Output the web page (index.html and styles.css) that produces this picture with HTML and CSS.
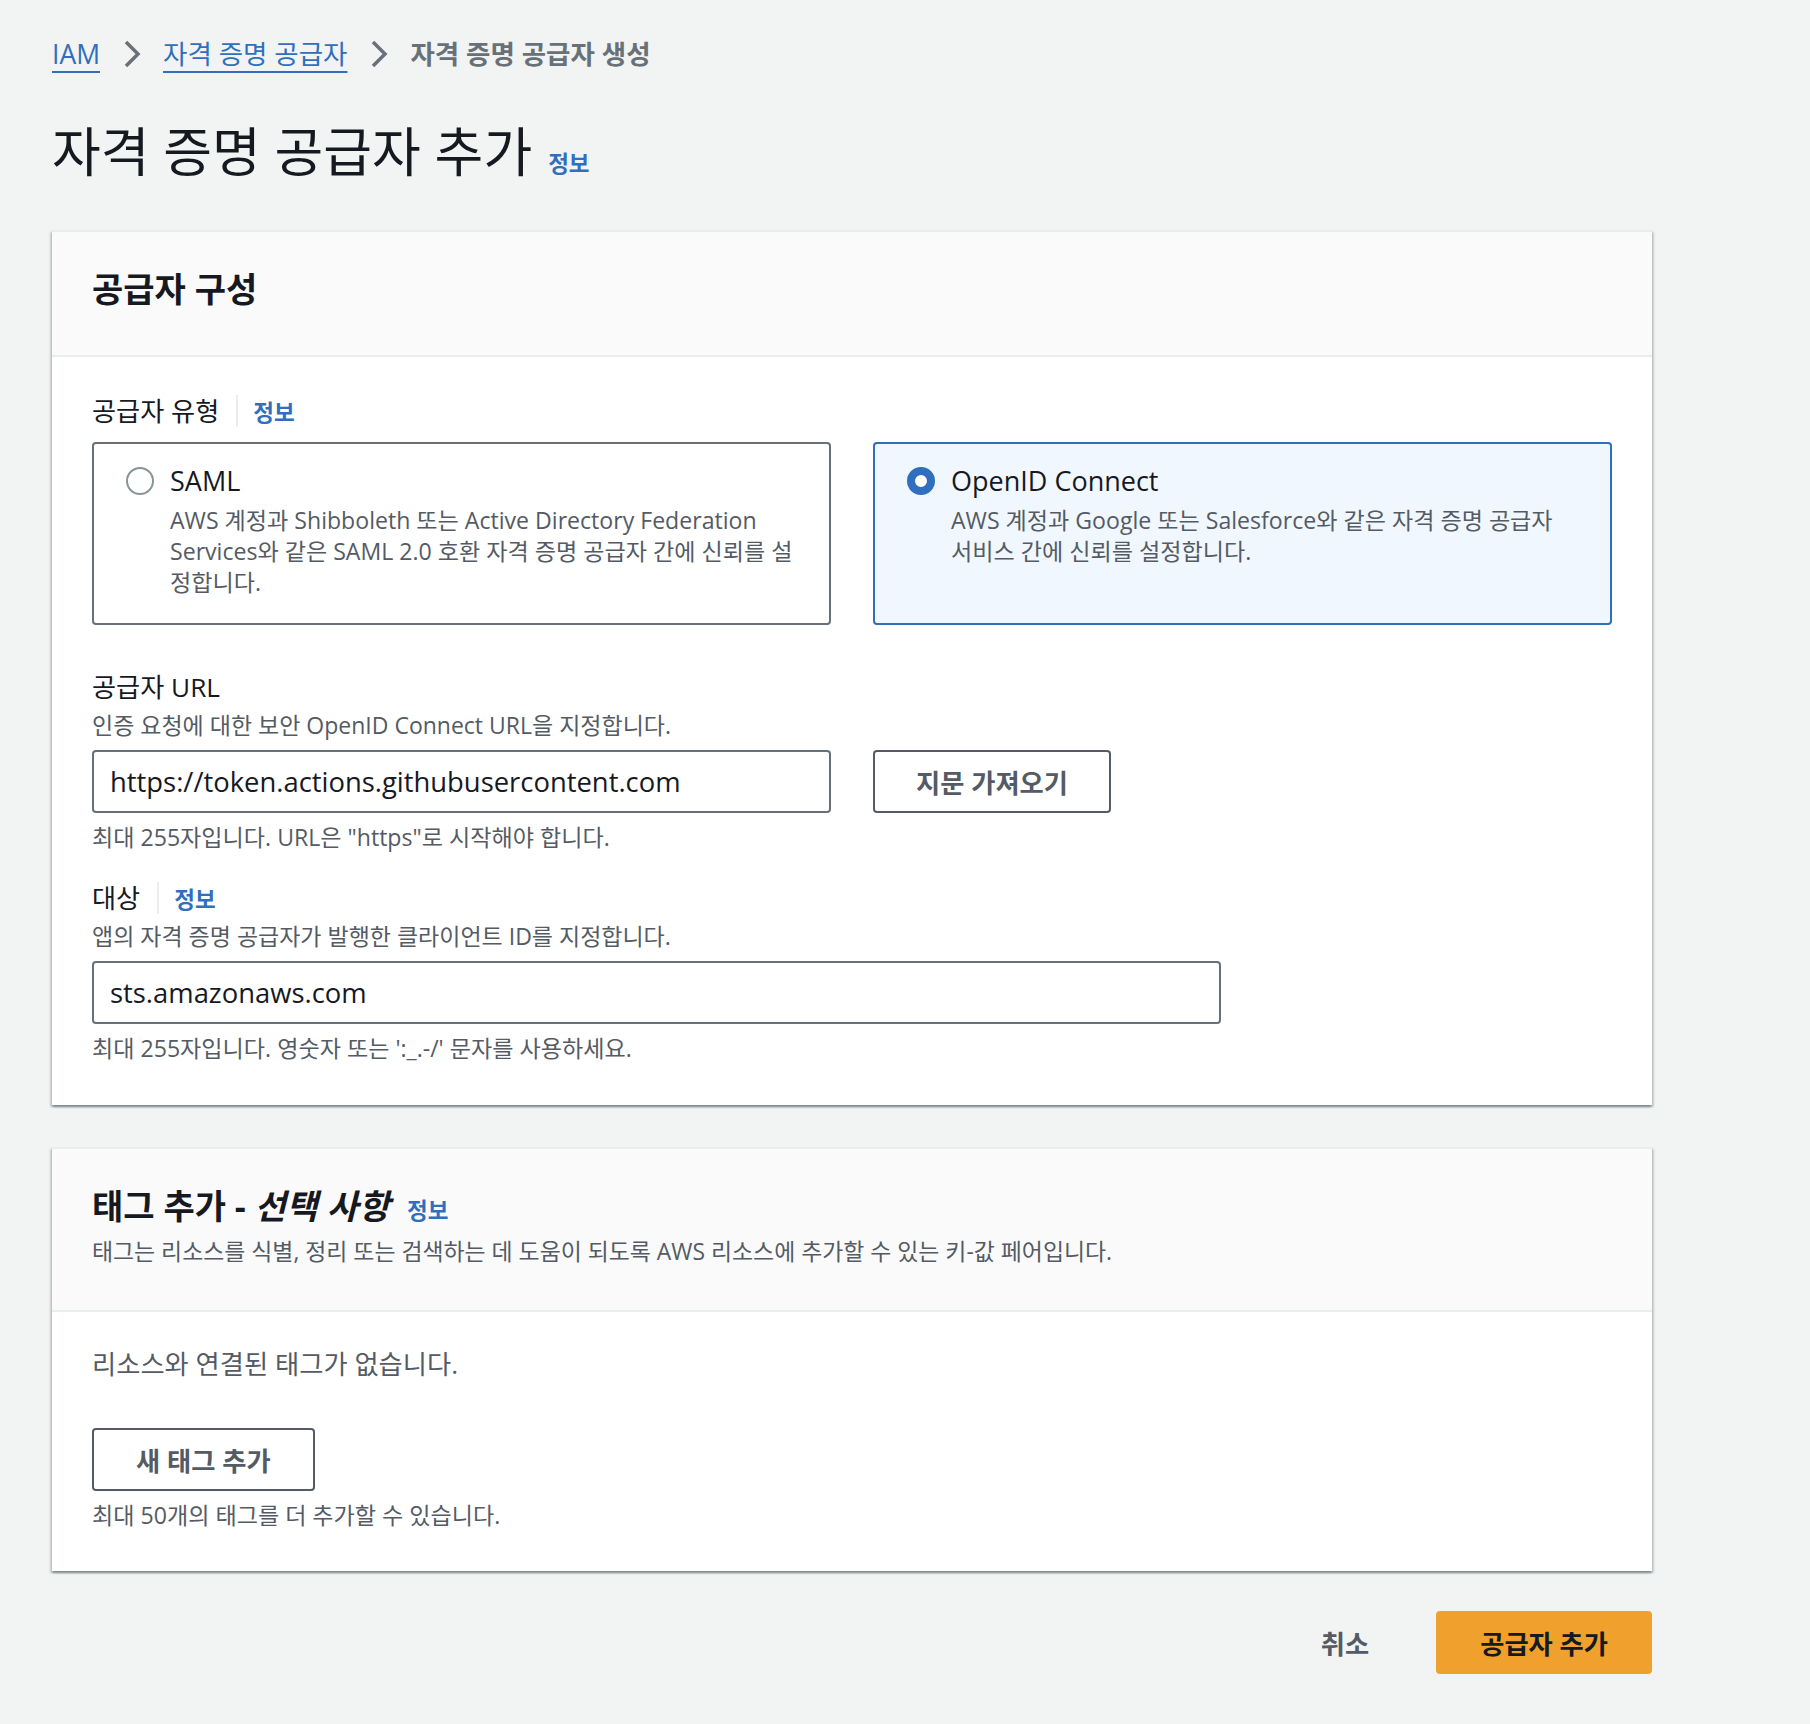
FILE: index.html
```html
<!DOCTYPE html>
<html lang="ko">
<head>
<meta charset="utf-8">
<title>자격 증명 공급자 추가</title>
<link rel="stylesheet" href="styles.css">
</head>
<body>
<div class="page">
  <nav class="crumbs">
    <a class="crumb-link" href="#">IAM</a>
    <svg class="chev" viewBox="0 0 20 30" aria-hidden="true"><path d="M4 3 L16 15 L4 27" /></svg>
    <a class="crumb-link" href="#">자격 증명 공급자</a>
    <svg class="chev" viewBox="0 0 20 30" aria-hidden="true"><path d="M4 3 L16 15 L4 27" /></svg>
    <span class="crumb-current">자격 증명 공급자 생성</span>
  </nav>

  <div class="page-title">
    <h1>자격 증명 공급자 추가</h1>
    <a class="info" href="#">정보</a>
  </div>

  <section class="panel">
    <div class="panel-head">
      <h2>공급자 구성</h2>
    </div>
    <div class="panel-body">
      <div class="field">
        <div class="label-row"><span class="label">공급자 유형</span><span class="sep"></span><a class="info" href="#">정보</a></div>
        <div class="tiles">
          <div class="tile">
            <span class="radio"></span>
            <div class="tile-text">
              <div class="tile-title">SAML</div>
              <div class="tile-desc">AWS 계정과 Shibboleth 또는 Active Directory Federation<br>Services와 같은 SAML 2.0 호환 자격 증명 공급자 간에 신뢰를 설<br>정합니다.</div>
            </div>
          </div>
          <div class="tile selected">
            <span class="radio"></span>
            <div class="tile-text">
              <div class="tile-title">OpenID Connect</div>
              <div class="tile-desc">AWS 계정과 Google 또는 Salesforce와 같은 자격 증명 공급자<br>서비스 간에 신뢰를 설정합니다.</div>
            </div>
          </div>
        </div>
      </div>

      <div class="field field-gap-lg">
        <div class="label-row"><span class="label">공급자 URL</span></div>
        <div class="desc">인증 요청에 대한 보안 OpenID Connect URL을 지정합니다.</div>
        <div class="control-row">
          <div class="input input-half">https://token.actions.githubusercontent.com</div>
          <button class="btn btn-thumb" type="button">지문 가져오기</button>
        </div>
        <div class="constraint">최대 255자입니다. URL은 "https"로 시작해야 합니다.</div>
      </div>

      <div class="field field-gap">
        <div class="label-row"><span class="label">대상</span><span class="sep"></span><a class="info" href="#">정보</a></div>
        <div class="desc">앱의 자격 증명 공급자가 발행한 클라이언트 ID를 지정합니다.</div>
        <div class="control-row">
          <div class="input input-wide">sts.amazonaws.com</div>
        </div>
        <div class="constraint">최대 255자입니다. 영숫자 또는 ':_.-/' 문자를 사용하세요.</div>
      </div>
    </div>
  </section>

  <section class="panel panel-second">
    <div class="panel-head panel-head-desc">
      <div class="head-row"><h2>태그 추가 - <em>선택 사항</em></h2><a class="info" href="#">정보</a></div>
      <div class="head-desc">태그는 리소스를 식별, 정리 또는 검색하는 데 도움이 되도록 AWS 리소스에 추가할 수 있는 키-값 페어입니다.</div>
    </div>
    <div class="panel-body panel-body-tags">
      <div class="empty">리소스와 연결된 태그가 없습니다.</div>
      <button class="btn btn-tag" type="button">새 태그 추가</button>
      <div class="constraint">최대 50개의 태그를 더 추가할 수 있습니다.</div>
    </div>
  </section>

  <div class="footer">
    <button class="btn-link" type="button">취소</button>
    <button class="btn-primary" type="button">공급자 추가</button>
  </div>
</div>
</body>
</html>
```

FILE: styles.css
```css
* { box-sizing: border-box; }

body {
  margin: 0;
  background: #f2f3f3;
  font-family: "Open Sans", "Noto Sans CJK KR", sans-serif;
  color: #16191f;
}

.page {
  width: 1652px;
  padding: 36px 0 50px 52px;
}

/* breadcrumbs */
.crumbs {
  display: flex;
  align-items: center;
  height: 36px;
  font-size: 26.5px;
  line-height: 36px;
}
.crumb-link {
  color: #2f6fbd;
  text-decoration: underline;
  text-decoration-thickness: 2px;
  text-underline-offset: 7px;
}
.chev {
  width: 20px;
  height: 30px;
  margin: 0 21px 0 22px;
  fill: none;
  stroke: #687078;
  stroke-width: 3.5;
}
.crumb-current {
  color: #687078;
  font-weight: 700;
}

/* title */
.page-title {
  display: flex;
  align-items: baseline;
  margin-top: 50px;
  height: 60px;
}
h1 {
  margin: 0;
  font-size: 53px;
  font-weight: 400;
  line-height: 60px;
}
.info {
  color: #2f6fbd;
  font-weight: 700;
  font-size: 22.5px;
  text-decoration: none;
}
.page-title .info { margin-left: 16px; }

/* panels */
.panel {
  margin-top: 48px;
  background: #fff;
  border-top: 2px solid #eaeded;
  box-shadow: 0 2px 2px 0 rgba(0, 28, 36, 0.3),
              2px 2px 2px 0 rgba(0, 28, 36, 0.15),
              -2px 2px 2px 0 rgba(0, 28, 36, 0.15);
}
.panel-second { margin-top: 42px; }

.panel-head {
  background: #fafafa;
  border-bottom: 2px solid #eaeded;
  padding: 37px 40px 46px;
}
.panel-head-desc { padding-bottom: 43px; }
h2 {
  margin: 0;
  font-size: 34px;
  font-weight: 700;
  line-height: 40px;
}
h2 em { font-style: italic; }
.head-row {
  display: flex;
  align-items: baseline;
}
h2 em { letter-spacing: 0.3px; }
.head-row .info { margin-left: 17px; }
.head-desc {
  margin-top: 11px;
  font-size: 22.9px;
  line-height: 30px;
  color: #545b64;
}

.panel-body { padding: 37px 40px 42px; }
.panel-body-tags { padding: 35px 40px 41px; }

/* fields */
.label-row {
  display: flex;
  align-items: center;
  height: 34px;
}
.label {
  font-size: 26.2px;
  line-height: 34px;
}
.sep {
  width: 2px;
  height: 32px;
  background: #eaeded;
  margin: 0 15px 0 17px;
}
.field-gap-lg { margin-top: 45px; }
.field-gap { margin-top: 29px; }

.desc {
  margin-top: 6px;
  font-size: 23px;
  line-height: 30px;
  color: #545b64;
}
.constraint {
  margin-top: 9px;
  font-size: 23.1px;
  line-height: 30px;
  color: #545b64;
}

/* tiles */
.tiles {
  display: grid;
  grid-template-columns: 1fr 1fr;
  gap: 42px;
  margin-top: 14px;
}
.tile {
  display: flex;
  gap: 16px;
  border: 2px solid #687078;
  border-radius: 4px;
  padding: 19px 20px 25px 32px;
}
.tile.selected {
  border-color: #2f6fbd;
  background: #f1f7fe;
}
.radio {
  flex: none;
  width: 28px;
  height: 28px;
  margin-top: 4px;
  border-radius: 50%;
  border: 2px solid #879596;
  background: #fff;
}
.tile.selected .radio {
  border: 8px solid #2f6fbd;
}
.tile-title {
  font-size: 27px;
  line-height: 36px;
}
.tile-desc {
  margin-top: 6px;
  font-size: 23.1px;
  line-height: 31px;
  color: #545b64;
  white-space: nowrap;
}

/* controls */
.control-row {
  display: flex;
  gap: 42px;
  margin-top: 10px;
}
.input {
  height: 63px;
  display: flex;
  align-items: center;
  padding: 0 16px;
  border: 2px solid #687078;
  border-radius: 4px;
  background: #fff;
  font-size: 27.4px;
  color: #16191f;
  white-space: nowrap;
}
.input-half { width: 739px; }
.input-wide { width: 1129px; }

.btn {
  height: 63px;
  padding: 0 41px;
  border: 2px solid #545b64;
  border-radius: 4px;
  background: #fff;
  color: #545b64;
  font-family: inherit;
  font-size: 26.3px;
  font-weight: 700;
  white-space: nowrap;
}
.btn-tag {
  display: block;
  margin-top: 47px;
  padding: 0 42px;
}

.empty {
  font-size: 26.3px;
  line-height: 34px;
  color: #545b64;
}

/* footer */
.footer {
  display: flex;
  justify-content: flex-end;
  gap: 27px;
  margin-top: 40px;
}
.btn-link {
  height: 63px;
  padding: 0 40px;
  border: none;
  background: transparent;
  color: #545b64;
  font-family: inherit;
  font-size: 26.3px;
  font-weight: 700;
}
.btn-primary {
  height: 63px;
  padding: 0 42px;
  border: 2px solid #f0a02c;
  border-radius: 4px;
  background: #f0a02c;
  color: #16191f;
  font-family: inherit;
  font-size: 26.3px;
  font-weight: 700;
  white-space: nowrap;
}
```
